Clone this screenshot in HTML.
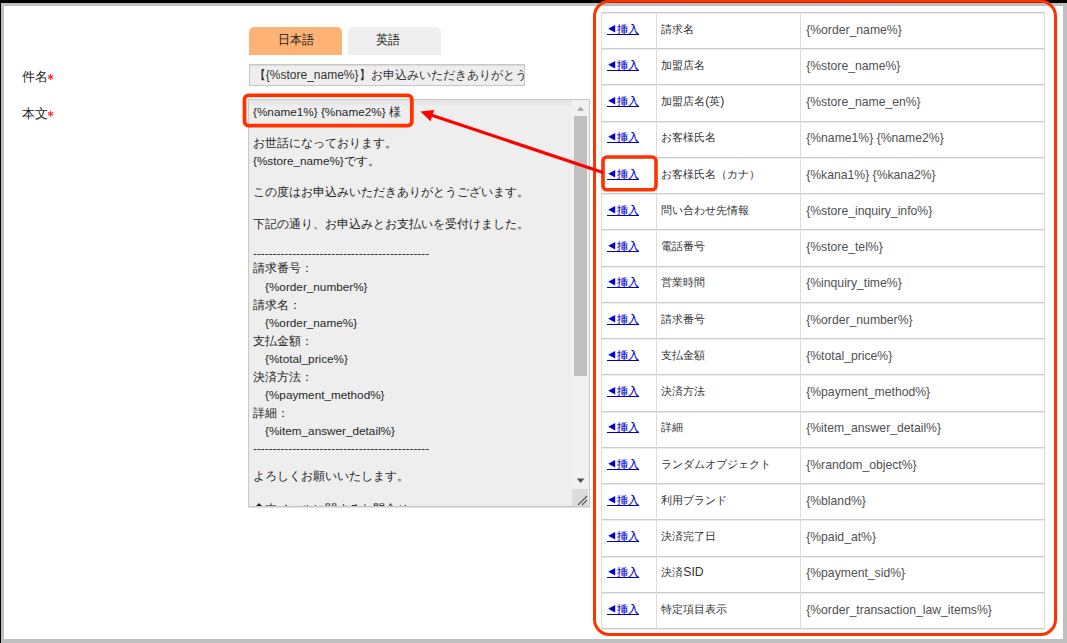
<!DOCTYPE html><html lang="ja"><head><meta charset="utf-8"><style>
html,body{margin:0;padding:0;}
body{width:1067px;height:643px;overflow:hidden;position:relative;background:#fff;font-family:"Liberation Sans",sans-serif;color:#333;}
.a{position:absolute;}
.label{font-size:12.5px;line-height:18px;color:#222;white-space:nowrap;}
.tab{top:27px;height:28px;border-radius:5px 5px 0 0;font-size:12.2px;line-height:26px;color:#222;box-sizing:border-box;}
#tab1{left:249px;width:93px;background:#feb276;padding-left:28.5px;}
#tab2{left:348px;width:93px;background:#efefef;padding-left:27.5px;}
#subject{left:249px;top:64px;width:274px;height:20px;border:1px solid #c6c6c6;background:#eeeeee;overflow:hidden;white-space:nowrap;font-size:12px;line-height:20.5px;color:#333;box-shadow:inset 0 1px 1px rgba(0,0,0,0.08);}
#ta{left:248px;top:99px;width:340px;height:406px;border:1px solid #c8c8c8;background:#eeeeee;overflow:hidden;box-shadow:0 1px 0 #e2e2e2;}
#tashade{left:0;top:0;width:324px;height:7px;background:linear-gradient(#e2e2e2,#eeeeee);}
.ln{position:absolute;left:4px;font-size:11.75px;line-height:18px;height:18px;white-space:pre;color:#262626;}
.ct{font-size:10.9px;line-height:18px;white-space:pre;color:#333;}
.ct .lat,.ctl{font-size:12.2px;}
.ctl{line-height:18px;white-space:pre;color:#505050;}
.ins{color:#0000cc;font-size:11px;line-height:14px;white-space:pre;-webkit-text-stroke:0.15px #0000cc;}
</style></head><body>
<div class="a" style="left:0;top:0;width:1067px;height:3px;background:#000"></div>
<div class="a" style="left:0;top:0;width:1px;height:643px;background:#000"></div>
<div class="a" style="left:1px;top:3px;width:1066px;height:3px;background:#bfbfbf"></div>
<div class="a" style="left:1px;top:3px;width:3px;height:640px;background:#bfbfbf"></div>
<div class="a" style="left:1063px;top:3px;width:4px;height:640px;background:#bfbfbf"></div>
<div class="a" style="left:1px;top:639px;width:1066px;height:4px;background:#bfbfbf"></div>
<div class="a label" style="left:22.3px;top:67.8px">件名</div>
<div class="a label" style="left:22.3px;top:105.3px">本文</div>
<svg class="a" style="left:0;top:0" width="70" height="130"><g stroke="#ff2a2a" stroke-width="1.05"><line x1="50.60" y1="74.00" x2="50.60" y2="80.00"/><line x1="48.00" y1="75.50" x2="53.20" y2="78.50"/><line x1="53.20" y1="75.50" x2="48.00" y2="78.50"/><line x1="50.60" y1="110.70" x2="50.60" y2="116.70"/><line x1="48.00" y1="112.20" x2="53.20" y2="115.20"/><line x1="53.20" y1="112.20" x2="48.00" y2="115.20"/></g></svg>
<div class="a tab" id="tab1"><span style="display:inline-block;transform:scaleY(1.08)">日本語</span></div><div class="a tab" id="tab2"><span style="display:inline-block;transform:scaleY(1.08)">英語</span></div>
<div class="a" id="subject"><span style="display:inline-block;width:3.8px"></span>【{%store_name%}】お申込みいただきありがとうございます</div>
<div class="a" id="ta"><div class="a" id="tashade"></div>
<div class="ln" style="top:2.50px">{%name1%} {%name2%} 様</div>
<div class="ln" style="top:34.20px">お世話になっております。</div>
<div class="ln" style="top:52.00px">{%store_name%}です。</div>
<div class="ln" style="top:83.10px">この度はお申込みいただきありがとうございます。</div>
<div class="ln" style="top:114.50px">下記の通り、お申込みとお支払いを受付けました。</div>
<div class="ln" style="top:144.30px">---------------------------------------------</div>
<div class="ln" style="top:159.40px">請求番号：</div>
<div class="ln" style="top:178.00px">　{%order_number%}</div>
<div class="ln" style="top:196.00px">請求名：</div>
<div class="ln" style="top:214.00px">　{%order_name%}</div>
<div class="ln" style="top:232.00px">支払金額：</div>
<div class="ln" style="top:250.00px">　{%total_price%}</div>
<div class="ln" style="top:268.00px">決済方法：</div>
<div class="ln" style="top:286.00px">　{%payment_method%}</div>
<div class="ln" style="top:304.00px">詳細：</div>
<div class="ln" style="top:322.00px">　{%item_answer_detail%}</div>
<div class="ln" style="top:339.30px">---------------------------------------------</div>
<div class="ln" style="top:367.30px">よろしくお願いいたします。</div>
<div class="ln" style="top:399.70px">◆本メールに関するお問合せ</div>
</div>
<div class="a" style="left:572px;top:100px;width:16px;height:406px;background:#f1f1f1"></div>
<div class="a" style="left:574px;top:116.4px;width:12.8px;height:259.2px;background:#bfbfbf"></div>
<svg class="a" style="left:560px;top:95px" width="40" height="420"><polygon points="577,110.8 584,110.8 580.5,106.8" transform="translate(-560,-95)" fill="#a3a3a3"/><polygon points="576.8,478.5 584.4,478.5 580.6,483" transform="translate(-560,-95)" fill="#505050"/><rect x="572" y="489" width="16" height="17" fill="#dcdcdc" transform="translate(-560,-95)"/><g stroke="#555" stroke-width="1.1" transform="translate(-560,-95)"><line x1="578" y1="505" x2="587" y2="496"/><line x1="582" y1="505" x2="587" y2="500"/></g></svg>
<div class="a" style="left:601px;top:12px;width:444px;height:1px;background:#cccccc"></div>
<div class="a" style="left:601px;top:13px;width:444px;height:1px;background:#ececec"></div>
<div class="a" style="left:601px;top:48px;width:444px;height:1px;background:#cccccc"></div>
<div class="a" style="left:601px;top:49px;width:444px;height:1px;background:#ececec"></div>
<div class="a" style="left:601px;top:84px;width:444px;height:1px;background:#cccccc"></div>
<div class="a" style="left:601px;top:85px;width:444px;height:1px;background:#ececec"></div>
<div class="a" style="left:601px;top:121px;width:444px;height:1px;background:#cccccc"></div>
<div class="a" style="left:601px;top:122px;width:444px;height:1px;background:#ececec"></div>
<div class="a" style="left:601px;top:157px;width:444px;height:1px;background:#cccccc"></div>
<div class="a" style="left:601px;top:158px;width:444px;height:1px;background:#ececec"></div>
<div class="a" style="left:601px;top:193px;width:444px;height:1px;background:#cccccc"></div>
<div class="a" style="left:601px;top:194px;width:444px;height:1px;background:#ececec"></div>
<div class="a" style="left:601px;top:229px;width:444px;height:1px;background:#cccccc"></div>
<div class="a" style="left:601px;top:230px;width:444px;height:1px;background:#ececec"></div>
<div class="a" style="left:601px;top:266px;width:444px;height:1px;background:#cccccc"></div>
<div class="a" style="left:601px;top:267px;width:444px;height:1px;background:#ececec"></div>
<div class="a" style="left:601px;top:302px;width:444px;height:1px;background:#cccccc"></div>
<div class="a" style="left:601px;top:303px;width:444px;height:1px;background:#ececec"></div>
<div class="a" style="left:601px;top:338px;width:444px;height:1px;background:#cccccc"></div>
<div class="a" style="left:601px;top:339px;width:444px;height:1px;background:#ececec"></div>
<div class="a" style="left:601px;top:374px;width:444px;height:1px;background:#cccccc"></div>
<div class="a" style="left:601px;top:375px;width:444px;height:1px;background:#ececec"></div>
<div class="a" style="left:601px;top:411px;width:444px;height:1px;background:#cccccc"></div>
<div class="a" style="left:601px;top:412px;width:444px;height:1px;background:#ececec"></div>
<div class="a" style="left:601px;top:447px;width:444px;height:1px;background:#cccccc"></div>
<div class="a" style="left:601px;top:448px;width:444px;height:1px;background:#ececec"></div>
<div class="a" style="left:601px;top:483px;width:444px;height:1px;background:#cccccc"></div>
<div class="a" style="left:601px;top:484px;width:444px;height:1px;background:#ececec"></div>
<div class="a" style="left:601px;top:519px;width:444px;height:1px;background:#cccccc"></div>
<div class="a" style="left:601px;top:520px;width:444px;height:1px;background:#ececec"></div>
<div class="a" style="left:601px;top:556px;width:444px;height:1px;background:#cccccc"></div>
<div class="a" style="left:601px;top:557px;width:444px;height:1px;background:#ececec"></div>
<div class="a" style="left:601px;top:592px;width:444px;height:1px;background:#cccccc"></div>
<div class="a" style="left:601px;top:593px;width:444px;height:1px;background:#ececec"></div>
<div class="a" style="left:601px;top:628px;width:444px;height:1px;background:#cccccc"></div>
<div class="a" style="left:601px;top:629px;width:444px;height:1px;background:#ececec"></div>
<div class="a" style="left:601px;top:12px;width:1px;height:617px;background:#dcdcdc"></div>
<div class="a" style="left:656px;top:12px;width:1px;height:617px;background:#dcdcdc"></div>
<div class="a" style="left:800px;top:12px;width:1px;height:617px;background:#dcdcdc"></div>
<div class="a" style="left:1044px;top:12px;width:1px;height:617px;background:#dcdcdc"></div>
<div class="a ct" style="left:661.3px;top:19.72px">請求名</div>
<div class="a ctl" style="left:806.2px;top:20.62px">{%order_name%}</div>
<div class="a ins" style="left:617.3px;top:21.72px">挿入</div>
<div class="a" style="left:606.8px;top:33.50px;width:32.2px;height:1px;background:#0000cc"></div>
<svg class="a" style="left:606px;top:22.70px" width="12" height="10"><polygon points="2.2,5.85 9.2,2.1 9.2,9.6" fill="#0000cc"/></svg>
<div class="a ct" style="left:661.3px;top:55.98px">加盟店名</div>
<div class="a ctl" style="left:806.2px;top:56.88px">{%store_name%}</div>
<div class="a ins" style="left:617.3px;top:57.98px">挿入</div>
<div class="a" style="left:606.8px;top:69.75px;width:32.2px;height:1px;background:#0000cc"></div>
<svg class="a" style="left:606px;top:58.95px" width="12" height="10"><polygon points="2.2,5.85 9.2,2.1 9.2,9.6" fill="#0000cc"/></svg>
<div class="a ct" style="left:661.3px;top:92.23px">加盟店名<span class="lat">(</span>英<span class="lat">)</span></div>
<div class="a ctl" style="left:806.2px;top:93.12px">{%store_name_en%}</div>
<div class="a ins" style="left:617.3px;top:94.23px">挿入</div>
<div class="a" style="left:606.8px;top:106.00px;width:32.2px;height:1px;background:#0000cc"></div>
<svg class="a" style="left:606px;top:95.20px" width="12" height="10"><polygon points="2.2,5.85 9.2,2.1 9.2,9.6" fill="#0000cc"/></svg>
<div class="a ct" style="left:661.3px;top:128.47px">お客様氏名</div>
<div class="a ctl" style="left:806.2px;top:129.38px">{%name1%} {%name2%}</div>
<div class="a ins" style="left:617.3px;top:130.47px">挿入</div>
<div class="a" style="left:606.8px;top:142.25px;width:32.2px;height:1px;background:#0000cc"></div>
<svg class="a" style="left:606px;top:131.45px" width="12" height="10"><polygon points="2.2,5.85 9.2,2.1 9.2,9.6" fill="#0000cc"/></svg>
<div class="a ct" style="left:661.3px;top:164.72px">お客様氏名（カナ）</div>
<div class="a ctl" style="left:806.2px;top:165.62px">{%kana1%} {%kana2%}</div>
<div class="a ins" style="left:617.3px;top:166.72px">挿入</div>
<div class="a" style="left:606.8px;top:178.50px;width:32.2px;height:1px;background:#0000cc"></div>
<svg class="a" style="left:606px;top:167.70px" width="12" height="10"><polygon points="2.2,5.85 9.2,2.1 9.2,9.6" fill="#0000cc"/></svg>
<div class="a ct" style="left:661.3px;top:200.97px">問い合わせ先情報</div>
<div class="a ctl" style="left:806.2px;top:201.88px">{%store_inquiry_info%}</div>
<div class="a ins" style="left:617.3px;top:202.97px">挿入</div>
<div class="a" style="left:606.8px;top:214.75px;width:32.2px;height:1px;background:#0000cc"></div>
<svg class="a" style="left:606px;top:203.95px" width="12" height="10"><polygon points="2.2,5.85 9.2,2.1 9.2,9.6" fill="#0000cc"/></svg>
<div class="a ct" style="left:661.3px;top:237.22px">電話番号</div>
<div class="a ctl" style="left:806.2px;top:238.12px">{%store_tel%}</div>
<div class="a ins" style="left:617.3px;top:239.22px">挿入</div>
<div class="a" style="left:606.8px;top:251.00px;width:32.2px;height:1px;background:#0000cc"></div>
<svg class="a" style="left:606px;top:240.20px" width="12" height="10"><polygon points="2.2,5.85 9.2,2.1 9.2,9.6" fill="#0000cc"/></svg>
<div class="a ct" style="left:661.3px;top:273.47px">営業時間</div>
<div class="a ctl" style="left:806.2px;top:274.38px">{%inquiry_time%}</div>
<div class="a ins" style="left:617.3px;top:275.47px">挿入</div>
<div class="a" style="left:606.8px;top:287.25px;width:32.2px;height:1px;background:#0000cc"></div>
<svg class="a" style="left:606px;top:276.45px" width="12" height="10"><polygon points="2.2,5.85 9.2,2.1 9.2,9.6" fill="#0000cc"/></svg>
<div class="a ct" style="left:661.3px;top:309.72px">請求番号</div>
<div class="a ctl" style="left:806.2px;top:310.62px">{%order_number%}</div>
<div class="a ins" style="left:617.3px;top:311.72px">挿入</div>
<div class="a" style="left:606.8px;top:323.50px;width:32.2px;height:1px;background:#0000cc"></div>
<svg class="a" style="left:606px;top:312.70px" width="12" height="10"><polygon points="2.2,5.85 9.2,2.1 9.2,9.6" fill="#0000cc"/></svg>
<div class="a ct" style="left:661.3px;top:345.97px">支払金額</div>
<div class="a ctl" style="left:806.2px;top:346.88px">{%total_price%}</div>
<div class="a ins" style="left:617.3px;top:347.97px">挿入</div>
<div class="a" style="left:606.8px;top:359.75px;width:32.2px;height:1px;background:#0000cc"></div>
<svg class="a" style="left:606px;top:348.95px" width="12" height="10"><polygon points="2.2,5.85 9.2,2.1 9.2,9.6" fill="#0000cc"/></svg>
<div class="a ct" style="left:661.3px;top:382.22px">決済方法</div>
<div class="a ctl" style="left:806.2px;top:383.12px">{%payment_method%}</div>
<div class="a ins" style="left:617.3px;top:384.22px">挿入</div>
<div class="a" style="left:606.8px;top:396.00px;width:32.2px;height:1px;background:#0000cc"></div>
<svg class="a" style="left:606px;top:385.20px" width="12" height="10"><polygon points="2.2,5.85 9.2,2.1 9.2,9.6" fill="#0000cc"/></svg>
<div class="a ct" style="left:661.3px;top:418.47px">詳細</div>
<div class="a ctl" style="left:806.2px;top:419.38px">{%item_answer_detail%}</div>
<div class="a ins" style="left:617.3px;top:420.47px">挿入</div>
<div class="a" style="left:606.8px;top:432.25px;width:32.2px;height:1px;background:#0000cc"></div>
<svg class="a" style="left:606px;top:421.45px" width="12" height="10"><polygon points="2.2,5.85 9.2,2.1 9.2,9.6" fill="#0000cc"/></svg>
<div class="a ct" style="left:661.3px;top:454.72px">ランダムオブジェクト</div>
<div class="a ctl" style="left:806.2px;top:455.62px">{%random_object%}</div>
<div class="a ins" style="left:617.3px;top:456.72px">挿入</div>
<div class="a" style="left:606.8px;top:468.50px;width:32.2px;height:1px;background:#0000cc"></div>
<svg class="a" style="left:606px;top:457.70px" width="12" height="10"><polygon points="2.2,5.85 9.2,2.1 9.2,9.6" fill="#0000cc"/></svg>
<div class="a ct" style="left:661.3px;top:490.97px">利用ブランド</div>
<div class="a ctl" style="left:806.2px;top:491.88px">{%bland%}</div>
<div class="a ins" style="left:617.3px;top:492.97px">挿入</div>
<div class="a" style="left:606.8px;top:504.75px;width:32.2px;height:1px;background:#0000cc"></div>
<svg class="a" style="left:606px;top:493.95px" width="12" height="10"><polygon points="2.2,5.85 9.2,2.1 9.2,9.6" fill="#0000cc"/></svg>
<div class="a ct" style="left:661.3px;top:527.23px">決済完了日</div>
<div class="a ctl" style="left:806.2px;top:528.12px">{%paid_at%}</div>
<div class="a ins" style="left:617.3px;top:529.23px">挿入</div>
<div class="a" style="left:606.8px;top:541.00px;width:32.2px;height:1px;background:#0000cc"></div>
<svg class="a" style="left:606px;top:530.20px" width="12" height="10"><polygon points="2.2,5.85 9.2,2.1 9.2,9.6" fill="#0000cc"/></svg>
<div class="a ct" style="left:661.3px;top:563.48px">決済<span class="lat">SID</span></div>
<div class="a ctl" style="left:806.2px;top:564.38px">{%payment_sid%}</div>
<div class="a ins" style="left:617.3px;top:565.48px">挿入</div>
<div class="a" style="left:606.8px;top:577.25px;width:32.2px;height:1px;background:#0000cc"></div>
<svg class="a" style="left:606px;top:566.45px" width="12" height="10"><polygon points="2.2,5.85 9.2,2.1 9.2,9.6" fill="#0000cc"/></svg>
<div class="a ct" style="left:661.3px;top:599.73px">特定項目表示</div>
<div class="a ctl" style="left:806.2px;top:600.62px">{%order_transaction_law_items%}</div>
<div class="a ins" style="left:617.3px;top:601.73px">挿入</div>
<div class="a" style="left:606.8px;top:613.50px;width:32.2px;height:1px;background:#0000cc"></div>
<svg class="a" style="left:606px;top:602.70px" width="12" height="10"><polygon points="2.2,5.85 9.2,2.1 9.2,9.6" fill="#0000cc"/></svg>
<svg class="a" style="left:0;top:0" width="1067" height="643" viewBox="0 0 1067 643">
  <rect x="594.5" y="1.2" width="461" height="633.3" rx="15" ry="15" fill="none" stroke="#ff3300" stroke-width="3"/>
  <rect x="244.5" y="95.3" width="167.3" height="30.3" rx="4" ry="4" fill="none" stroke="#ff3300" stroke-width="3.8"/>
  <rect x="603" y="157" width="53" height="32.8" rx="4" ry="4" fill="none" stroke="#ff3300" stroke-width="3.6"/>
  <line x1="428" y1="114" x2="603" y2="172.5" stroke="#ff0000" stroke-width="3.2"/>
  <polygon points="420.4,111.5 434.2,110 430.5,121.2" fill="#ff0000"/>
</svg>
</body></html>
